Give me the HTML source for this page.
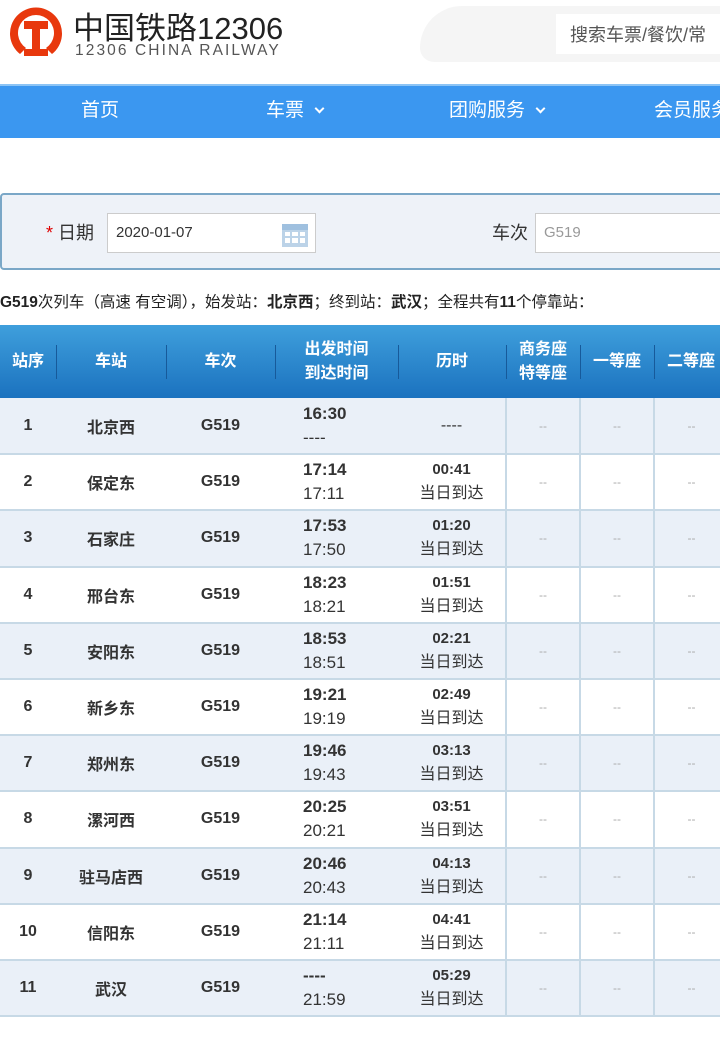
<!DOCTYPE html>
<html><head><meta charset="utf-8"><style>
*{margin:0;padding:0;box-sizing:border-box}
body{width:720px;height:1055px;overflow:hidden;background:#fff;font-family:"Liberation Sans","Noto Sans CJK SC",sans-serif;color:#333;position:relative}
.abs{position:absolute}
.nav{top:84px;left:0;width:720px;height:54px;background:#3b97f0;border-top:2px solid #8cc4f5;color:#fff;font-size:19px;white-space:nowrap;overflow:hidden}
.nav span{position:absolute;top:9px}
.chev{display:inline-block;width:7px;height:7px;border-right:2px solid #fff;border-bottom:2px solid #fff;transform:rotate(45deg);margin-left:12px;position:relative;top:-4px}
.form{top:193px;left:0;width:740px;height:77px;background:#eef2f8;border:2px solid #7aa7c7;border-radius:4px}
.inp{position:absolute;background:#fff;border:1px solid #ccc;height:40px;font-size:15px;line-height:38px;padding-left:8px}
table{position:absolute;top:325px;left:0;border-collapse:collapse;width:728px;table-layout:fixed}
th{height:73px;background:linear-gradient(#3f9fdc,#1b72bf);color:#fff;font-size:16px;font-weight:bold;line-height:24px;position:relative}
th+th:before{content:"";position:absolute;left:0;top:20px;height:34px;border-left:1px solid #175a9a}
td{height:56.2px;text-align:center;font-size:16px;font-weight:bold;color:#333;border-bottom:2px solid #c7d9e6}
tr.o td{background:#eaf0f8}
td.s{border-left:2px solid #c7d9e6;color:#aaa;font-weight:normal;font-size:12px}
td.t{text-align:left;padding-left:28px;line-height:24px;font-size:17px}
td.t i{font-style:normal;font-weight:normal}
td.d{line-height:24px;font-size:15px}
td.d i{font-style:normal;font-weight:normal;font-size:16px}
</style></head><body>
<svg class="abs" style="left:6px;top:4px" width="60" height="58" viewBox="0 0 60 58"><path d="M14 50 A26 26 0 1 1 46 50 L40 44 A18 18 0 1 0 20 44 Z" fill="#e8380d"/><path d="M18 17 H42 V25 H34 V45 H42 V52 H18 V45 H26 V25 H18 Z" fill="#e8380d"/></svg>
<div class="abs" style="left:73px;top:3px;font-size:31px;color:#222">中国铁路12306</div>
<div class="abs" style="left:75px;top:42px;font-size:15.5px;color:#555;letter-spacing:2.1px">12306 CHINA RAILWAY</div>
<div class="abs" style="left:420px;top:6px;width:320px;height:56px;background:#f5f5f5;border-radius:60px 0 0 20px"></div>
<div class="abs" style="left:556px;top:14px;width:180px;height:40px;background:#fff;font-size:18px;color:#555;padding:7px 14px;white-space:nowrap">搜索车票/餐饮/常</div>
<div class="abs nav"><span style="left:81px">首页</span><span style="left:266px">车票<i class="chev"></i></span><span style="left:449px">团购服务<i class="chev"></i></span><span style="left:654px">会员服务</span></div>
<div class="abs form">
<div class="abs" style="left:44px;top:24px;font-size:18px"><span style="color:#d00">*</span> 日期</div>
<div class="inp" style="left:105px;top:18px;width:209px">2020-01-07
<svg style="position:absolute;right:6px;top:6px" width="28" height="28" viewBox="0 0 28 28"><rect x="1" y="4" width="26" height="23" fill="#bcd3e8"/><rect x="1" y="4" width="26" height="6" fill="#9fc0df"/><g fill="#fff"><rect x="4" y="12" width="5" height="4"/><rect x="11" y="12" width="6" height="4"/><rect x="19" y="12" width="5" height="4"/><rect x="4" y="18" width="5" height="5"/><rect x="11" y="18" width="6" height="5"/><rect x="19" y="18" width="5" height="5"/></g></svg></div>
<div class="abs" style="left:490px;top:24px;font-size:18px">车次</div>
<div class="inp" style="left:533px;top:18px;width:220px;color:#999">G519</div>
</div>
<div class="abs" style="left:0;top:290px;font-size:15.5px;color:#222;white-space:nowrap"><b>G519</b>次列车（高速 有空调），始发站：<b>北京西</b>；终到站：<b>武汉</b>；全程共有<b>11</b>个停靠站：</div>
<table>
<colgroup><col style="width:56px"><col style="width:110px"><col style="width:109px"><col style="width:123px"><col style="width:108px"><col style="width:74px"><col style="width:74px"><col style="width:74px"></colgroup>
<tr><th>站序</th><th>车站</th><th>车次</th><th>出发时间<br>到达时间</th><th>历时</th><th>商务座<br>特等座</th><th>一等座</th><th>二等座</th></tr>
<tr class="o"><td>1</td><td>北京西</td><td>G519</td><td class="t">16:30<br><i>----</i></td><td class="d"><i>----</i></td><td class="s">--</td><td class="s">--</td><td class="s">--</td></tr>
<tr><td>2</td><td>保定东</td><td>G519</td><td class="t">17:14<br><i>17:11</i></td><td class="d">00:41<br><i>当日到达</i></td><td class="s">--</td><td class="s">--</td><td class="s">--</td></tr>
<tr class="o"><td>3</td><td>石家庄</td><td>G519</td><td class="t">17:53<br><i>17:50</i></td><td class="d">01:20<br><i>当日到达</i></td><td class="s">--</td><td class="s">--</td><td class="s">--</td></tr>
<tr><td>4</td><td>邢台东</td><td>G519</td><td class="t">18:23<br><i>18:21</i></td><td class="d">01:51<br><i>当日到达</i></td><td class="s">--</td><td class="s">--</td><td class="s">--</td></tr>
<tr class="o"><td>5</td><td>安阳东</td><td>G519</td><td class="t">18:53<br><i>18:51</i></td><td class="d">02:21<br><i>当日到达</i></td><td class="s">--</td><td class="s">--</td><td class="s">--</td></tr>
<tr><td>6</td><td>新乡东</td><td>G519</td><td class="t">19:21<br><i>19:19</i></td><td class="d">02:49<br><i>当日到达</i></td><td class="s">--</td><td class="s">--</td><td class="s">--</td></tr>
<tr class="o"><td>7</td><td>郑州东</td><td>G519</td><td class="t">19:46<br><i>19:43</i></td><td class="d">03:13<br><i>当日到达</i></td><td class="s">--</td><td class="s">--</td><td class="s">--</td></tr>
<tr><td>8</td><td>漯河西</td><td>G519</td><td class="t">20:25<br><i>20:21</i></td><td class="d">03:51<br><i>当日到达</i></td><td class="s">--</td><td class="s">--</td><td class="s">--</td></tr>
<tr class="o"><td>9</td><td>驻马店西</td><td>G519</td><td class="t">20:46<br><i>20:43</i></td><td class="d">04:13<br><i>当日到达</i></td><td class="s">--</td><td class="s">--</td><td class="s">--</td></tr>
<tr><td>10</td><td>信阳东</td><td>G519</td><td class="t">21:14<br><i>21:11</i></td><td class="d">04:41<br><i>当日到达</i></td><td class="s">--</td><td class="s">--</td><td class="s">--</td></tr>
<tr class="o"><td>11</td><td>武汉</td><td>G519</td><td class="t">----<br><i>21:59</i></td><td class="d">05:29<br><i>当日到达</i></td><td class="s">--</td><td class="s">--</td><td class="s">--</td></tr>
</table>
</body></html>
